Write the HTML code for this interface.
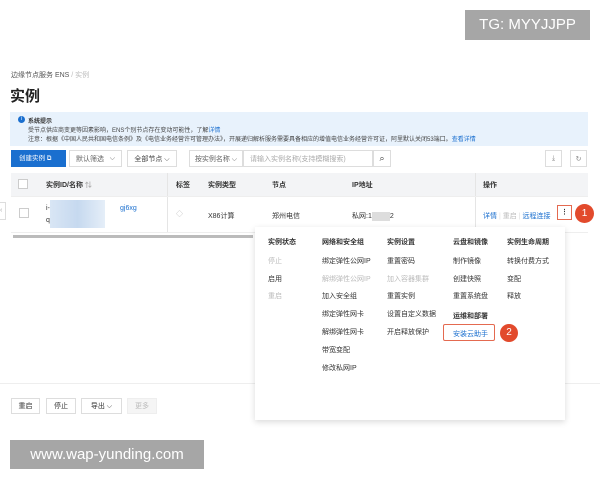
<!DOCTYPE html>
<html><head><meta charset="utf-8"><style>
*{margin:0;padding:0;box-sizing:border-box}
body{width:600px;height:480px;position:relative;background:#fff;font-family:"Liberation Sans","Noto Sans CJK SC",sans-serif;color:#333;overflow:hidden;font-size:7px}
.a{position:absolute;white-space:nowrap}
.btn{position:absolute;border:1px solid #ddd;background:#fff;font-size:7px;display:flex;align-items:center;justify-content:center;color:#333}
.m{position:absolute;font-size:7px;color:#333;white-space:nowrap}
.mh{font-weight:bold}
.g{color:#bbb}
</style></head><body>
<div class="a" style="left:465px;top:10px;width:125px;height:30px;background:#a6a6a6;color:#fff;font-size:15px;line-height:30px;text-align:center">TG: MYYJJPP</div>

<div class="a" style="left:11px;top:70px;font-size:7px;color:#555">边缘节点服务 ENS <span style="color:#bbb">/ 实例</span></div>
<div class="a" style="left:10px;top:85px;font-size:15px;font-weight:bold;color:#222">实例</div>

<div class="a" style="left:10px;top:112px;width:578px;height:34px;background:#e8f2fc"></div>
<div class="a" style="left:18px;top:116px;width:7px;height:7px;border-radius:50%;background:#1a6fcf;color:#fff;font-size:5px;text-align:center;line-height:7px">i</div>
<div class="a" style="left:28px;top:116px;font-size:6px;font-weight:bold">系统提示</div>
<div class="a" style="left:28px;top:125px;font-size:6px;color:#444">受节点供应商变更等因素影响，ENS个别节点存在变动可能性，了解<span style="color:#1a6fcf">详情</span></div>
<div class="a" style="left:28px;top:134px;font-size:6px;color:#444">注意：根据《中国人民共和国电信条例》及《电信业务经营许可管理办法》，开展递归解析服务需要具备相应的增值电信业务经营许可证，阿里默认关闭53端口。<span style="color:#1a6fcf">查看详情</span></div>

<div class="a" style="left:11px;top:150px;width:55px;height:17px;background:#1a6fcf;color:#fff;font-size:6.5px;line-height:17px;padding-left:8px">创建实例 ⧉</div>
<div class="btn" style="left:69px;top:150px;width:53px;height:17px;justify-content:space-between;padding:0 6px;color:#666"><span>默认筛选</span><span>⌵</span></div>
<div class="btn" style="left:127px;top:150px;width:50px;height:17px;color:#444">全部节点 ⌵</div>
<div class="btn" style="left:189px;top:150px;width:54px;height:17px;color:#666">按实例名称 ⌵</div>
<div class="btn" style="left:243px;top:150px;width:130px;height:17px;justify-content:flex-start;padding-left:6px;color:#aaa">请输入实例名称(支持模糊搜索)</div>
<div class="btn" style="left:373px;top:150px;width:18px;height:17px;font-size:9px">⌕</div>
<div class="btn" style="left:545px;top:150px;width:17px;height:17px;color:#888">⤓</div>
<div class="btn" style="left:570px;top:150px;width:17px;height:17px;color:#888">↻</div>

<div class="a" style="left:11px;top:173px;width:577px;height:23px;background:#f3f4f6"></div>
<div class="a" style="left:18px;top:179px;width:10px;height:10px;border:1px solid #ccc;background:#fff"></div>
<div class="a" style="left:46px;top:180px;font-weight:bold">实例ID/名称 <span style="color:#aaa">⇅</span></div>
<div class="a" style="left:167px;top:173px;width:1px;height:60px;background:#e5e5e5"></div>
<div class="a" style="left:176px;top:180px;font-weight:bold">标签</div>
<div class="a" style="left:208px;top:180px;font-weight:bold">实例类型</div>
<div class="a" style="left:272px;top:180px;font-weight:bold">节点</div>
<div class="a" style="left:352px;top:180px;font-weight:bold">IP地址</div>
<div class="a" style="left:475px;top:173px;width:1px;height:60px;background:#e5e5e5"></div>
<div class="a" style="left:483px;top:180px;font-weight:bold">操作</div>

<div class="a" style="left:11px;top:196px;width:577px;height:1px;background:#eee"></div>
<div class="a" style="left:0;top:202px;width:6px;height:18px;border:1px solid #ddd;border-left:none;color:#aaa;font-size:7px;line-height:16px">‹</div>
<div class="a" style="left:19px;top:208px;width:10px;height:10px;border:1px solid #ccc"></div>
<div class="a" style="left:46px;top:205px">i-</div><div class="a" style="left:46px;top:217px">q</div>
<div class="a" style="left:50px;top:200px;width:55px;height:28px;background:linear-gradient(90deg,#d9e6f5,#c6d9ef,#e5eef8)"></div>
<div class="a" style="left:120px;top:205px;color:#1a6fcf">gj6xg</div>
<div class="a" style="left:176px;top:209px;color:#bbb">◇</div>
<div class="a" style="left:208px;top:211px">X86计算</div>
<div class="a" style="left:272px;top:211px">郑州电信</div>
<div class="a" style="left:352px;top:211px">私网:1<span style="display:inline-block;width:18px;height:9px;background:#ddd;vertical-align:middle"></span>2</div>
<div class="a" style="left:483px;top:211px;color:#1a6fcf">详情 <span style="color:#ddd">|</span> <span style="color:#bbb">重启</span> <span style="color:#ddd">|</span> 远程连接</div>
<div class="a" style="left:557px;top:205px;width:15px;height:15px;border:1px solid #e46a50;text-align:center;line-height:13px;font-weight:bold">⋮</div>
<div class="a" style="left:575px;top:204px;width:19px;height:19px;border-radius:50%;background:#e24a2c;color:#fff;font-size:10px;text-align:center;line-height:19px">1</div>
<div class="a" style="left:13px;top:235px;width:240px;height:3px;background:#bbb"></div>
<div class="a" style="left:11px;top:232px;width:577px;height:1px;background:#eee"></div>

<div class="a" style="left:0;top:383px;width:600px;height:1px;background:#eee"></div>
<div class="btn" style="left:11px;top:398px;width:29px;height:16px">重启</div>
<div class="btn" style="left:46px;top:398px;width:30px;height:16px">停止</div>
<div class="btn" style="left:81px;top:398px;width:41px;height:16px">导出 ⌵</div>
<div class="btn" style="left:127px;top:398px;width:30px;height:16px;background:#f5f5f5;color:#bbb;border-color:#eee">更多</div>
<div class="a" style="left:562px;top:398px;color:#ccc;font-size:8px">›</div>

<div class="a" style="left:255px;top:227px;width:310px;height:193px;background:#fff;box-shadow:0 2px 6px rgba(0,0,0,.15)"></div>
<div class="m mh" style="left:268px;top:237px">实例状态</div>
<div class="m g" style="left:268px;top:256px">停止</div>
<div class="m" style="left:268px;top:274px">启用</div>
<div class="m g" style="left:268px;top:291px">重启</div>
<div class="m mh" style="left:322px;top:237px">网络和安全组</div>
<div class="m" style="left:322px;top:256px">绑定弹性公网IP</div>
<div class="m g" style="left:322px;top:274px">解绑弹性公网IP</div>
<div class="m" style="left:322px;top:291px">加入安全组</div>
<div class="m" style="left:322px;top:309px">绑定弹性网卡</div>
<div class="m" style="left:322px;top:327px">解绑弹性网卡</div>
<div class="m" style="left:322px;top:345px">带宽变配</div>
<div class="m" style="left:322px;top:363px">修改私网IP</div>
<div class="m mh" style="left:387px;top:237px">实例设置</div>
<div class="m" style="left:387px;top:256px">重置密码</div>
<div class="m g" style="left:387px;top:274px">加入容器集群</div>
<div class="m" style="left:387px;top:291px">重置实例</div>
<div class="m" style="left:387px;top:309px">设置自定义数据</div>
<div class="m" style="left:387px;top:327px">开启释放保护</div>
<div class="m mh" style="left:453px;top:237px">云盘和镜像</div>
<div class="m" style="left:453px;top:256px">制作镜像</div>
<div class="m" style="left:453px;top:274px">创建快照</div>
<div class="m" style="left:453px;top:291px">重置系统盘</div>
<div class="m mh" style="left:453px;top:311px">运维和部署</div>
<div class="a" style="left:443px;top:324px;width:52px;height:17px;border:1px solid #e46a50;border-radius:2px"></div>
<div class="m" style="left:453px;top:329px;color:#1a6fcf">安装云助手</div>
<div class="a" style="left:500px;top:324px;width:18px;height:18px;border-radius:50%;background:#e24a2c;color:#fff;font-size:10px;text-align:center;line-height:18px">2</div>
<div class="m mh" style="left:507px;top:237px">实例生命周期</div>
<div class="m" style="left:507px;top:256px">转换付费方式</div>
<div class="m" style="left:507px;top:274px">变配</div>
<div class="m" style="left:507px;top:291px">释放</div>

<div class="a" style="left:10px;top:440px;width:194px;height:29px;background:#a6a6a6;color:#fff;font-size:15px;line-height:29px;text-align:center">www.wap-yunding.com</div>
</body></html>
